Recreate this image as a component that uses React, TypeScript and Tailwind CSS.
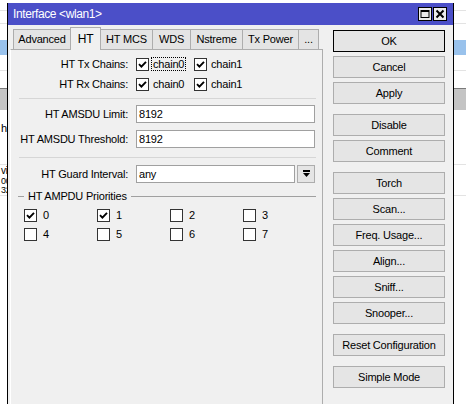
import React from "react";

function Check({ checked }: { checked?: boolean }) {
  return (
    <div className="w-[13px] h-[13px] shrink-0 border border-[#333333] bg-white flex items-center justify-center">
      {checked && (
        <svg width="9" height="9" viewBox="0 0 9 9">
          <path d="M1 4.2 L3.4 6.6 L8 1.8" fill="none" stroke="#000" strokeWidth="1.9" />
        </svg>
      )}
    </div>
  );
}

function Btn({ label, def }: { label: string; def?: boolean }) {
  return (
    <div
      className={`w-[112px] h-[22px] flex items-center justify-center bg-[#e5e5e5] border ${
        def ? "border-black" : "border-[#adadad]"
      }`}
    >
      {label}
    </div>
  );
}

const tabs = ["Advanced", "HT", "HT MCS", "WDS", "Nstreme", "Tx Power", "..."];
const tabW = [58, 31, 53, 39, 53, 57, 21];

export default function App() {
  return (
    <div className="relative w-[466px] h-[404px] overflow-hidden bg-white font-['Liberation_Sans',Arial,sans-serif] text-[11px] tracking-[-0.2px] text-black">
      {/* background list behind the window */}
      <div className="flex flex-col">
        <div className="h-[11px] border-b border-[#e3e3e3]" />
        <div className="h-[13px] border-b border-[#e3e3e3]" />
        <div className="h-[16px]" />
        <div className="h-[15px] bg-[#99c2ec]" />
        <div className="h-[16px] border-b border-[#e3e3e3]" />
        <div className="h-[17px]" />
        <div className="h-[22px] bg-[#c4c4c4] border-t border-[#7a7a7a]" />
        <div className="h-[12px]" />
        <div className="h-[12px] leading-[12px] pl-[1px]">ha</div>
        <div className="h-[31px] border-b border-[#e3e3e3]" />
        <div className="h-[12px] leading-[12px] text-[10px] pl-[1px]">vi</div>
        <div className="h-[9px] leading-[9px] text-[9px] pl-[1px]">00</div>
        <div className="h-[10px] border-b border-[#e3e3e3] leading-[9px] text-[9px] pl-[1px]">32</div>
      </div>

      {/* window */}
      <div className="absolute left-[7px] top-[3px] w-[447px] h-[420px] border-x border-black bg-[#f0f0f0] flex flex-col">
        {/* title bar */}
        <div className="h-[22px] bg-[#4b4fc8] flex items-center pl-[5px] pr-[6px] text-white text-[12px] tracking-[-0.4px]">
          <span className="flex-1">Interface &lt;wlan1&gt;</span>
          <div className="flex gap-[1px]">
            <div className="w-[14px] h-[14px] bg-[#ececec] border border-black flex items-center justify-center">
              <svg width="10" height="10" viewBox="0 0 10 10">
                <rect x="1" y="1.5" width="8" height="7" fill="none" stroke="#000" strokeWidth="1" />
                <rect x="1" y="1" width="8" height="2" fill="#000" />
              </svg>
            </div>
            <div className="w-[14px] h-[14px] bg-[#ececec] border border-black flex items-center justify-center">
              <svg width="10" height="10" viewBox="0 0 10 10">
                <path d="M1.5 1.5 L8.5 8.5 M8.5 1.5 L1.5 8.5" stroke="#000" strokeWidth="2" />
              </svg>
            </div>
          </div>
        </div>

        {/* body */}
        <div className="flex flex-1">
          {/* left: tabs */}
          <div className="ml-[2px] w-[313px] flex flex-col">
            <div className="h-[24px] flex items-end pl-[3px]">
              {tabs.map((t, i) => {
                const sel = t === "HT";
                return (
                  <div
                    key={t}
                    style={{ width: tabW[i] }}
                    className={`flex items-center justify-center border-t border-x border-[#adadad] ${
                      i > 0 ? "-ml-px" : ""
                    } ${
                      sel
                        ? "h-[23px] bg-[#f0f0f0] relative z-10 -mb-px text-[12px]"
                        : "h-[20px] bg-[#e4e4e4]"
                    }`}
                  >
                    {t}
                  </div>
                );
              })}
            </div>
            <div className="flex-1 border border-[#adadad] border-l-[#ffffff] bg-[#f0f0f0] pt-[4px] flex flex-col">
              {/* chains */}
              <div className="h-[20px] flex items-center">
                <div className="w-[117px] text-right">HT Tx Chains:</div>
                <div className="ml-[8px] w-[58px] flex items-center gap-[3px]">
                  <Check checked />
                  <span className="outline outline-1 outline-dotted outline-black px-[1px] leading-[12px]">chain0</span>
                </div>
                <div className="flex items-center gap-[3px]">
                  <Check checked />
                  <span className="px-[1px]">chain1</span>
                </div>
              </div>
              <div className="h-[20px] flex items-center">
                <div className="w-[117px] text-right">HT Rx Chains:</div>
                <div className="ml-[8px] w-[58px] flex items-center gap-[3px]">
                  <Check checked />
                  <span className="px-[1px]">chain0</span>
                </div>
                <div className="flex items-center gap-[3px]">
                  <Check checked />
                  <span className="px-[1px]">chain1</span>
                </div>
              </div>
              <div className="mt-[4px] ml-[8px] mr-[6px] h-px bg-[#d6d6d6]" />

              {/* AMSDU */}
              <div className="mt-[6px] flex items-center">
                <div className="w-[117px] text-right">HT AMSDU Limit:</div>
                <div className="ml-[8px] w-[179px] h-[18px] bg-white border border-[#a0a0a0] flex items-center pl-[2px]">8192</div>
              </div>
              <div className="mt-[7px] flex items-center">
                <div className="w-[117px] text-right">HT AMSDU Threshold:</div>
                <div className="ml-[8px] w-[179px] h-[18px] bg-white border border-[#a0a0a0] flex items-center pl-[2px]">8192</div>
              </div>
              <div className="mt-[9px] ml-[8px] mr-[6px] h-px bg-[#d6d6d6]" />

              {/* guard interval */}
              <div className="mt-[7px] flex items-center">
                <div className="w-[117px] text-right">HT Guard Interval:</div>
                <div className="ml-[8px] w-[159px] h-[18px] bg-white border border-[#a0a0a0] flex items-center pl-[2px]">any</div>
                <div className="ml-[2px] w-[18px] h-[18px] bg-[#e5e5e5] border border-[#adadad] flex items-center justify-center">
                  <svg width="7" height="8" viewBox="0 0 7 8">
                    <rect x="0" y="0" width="7" height="2" fill="#000" />
                    <path d="M0 3 L7 3 L3.5 7 Z" fill="#000" />
                  </svg>
                </div>
              </div>

              {/* priorities group */}
              <div className="mt-[7px] h-[13px] flex items-center pl-[7px] pr-[6px]">
                <div className="w-[6px] h-px bg-[#a0a0a0]" />
                <span className="px-[4px]">HT AMPDU Priorities</span>
                <div className="flex-1 h-px bg-[#a0a0a0]" />
              </div>
              <div className="mt-[6px] pl-[13px] grid grid-cols-[73px_73px_73px_73px] gap-y-[6px]">
                {[0, 1, 2, 3, 4, 5, 6, 7].map((n) => (
                  <div key={n} className="h-[13px] flex items-center gap-[6px]">
                    <Check checked={n < 2} />
                    <span>{n}</span>
                  </div>
                ))}
              </div>
            </div>
          </div>

          {/* right: buttons */}
          <div className="ml-[10px] pt-[5px] flex flex-col">
            <div className="flex flex-col gap-[4px]">
              <Btn label="OK" def />
              <Btn label="Cancel" />
              <Btn label="Apply" />
            </div>
            <div className="mt-[10px] flex flex-col gap-[4px]">
              <Btn label="Disable" />
              <Btn label="Comment" />
            </div>
            <div className="mt-[10px] flex flex-col gap-[4px]">
              <Btn label="Torch" />
              <Btn label="Scan..." />
              <Btn label="Freq. Usage..." />
              <Btn label="Align..." />
              <Btn label="Sniff..." />
              <Btn label="Snooper..." />
            </div>
            <div className="mt-[10px]">
              <Btn label="Reset Configuration" />
            </div>
            <div className="mt-[10px]">
              <Btn label="Simple Mode" />
            </div>
          </div>
        </div>
      </div>
    </div>
  );
}
